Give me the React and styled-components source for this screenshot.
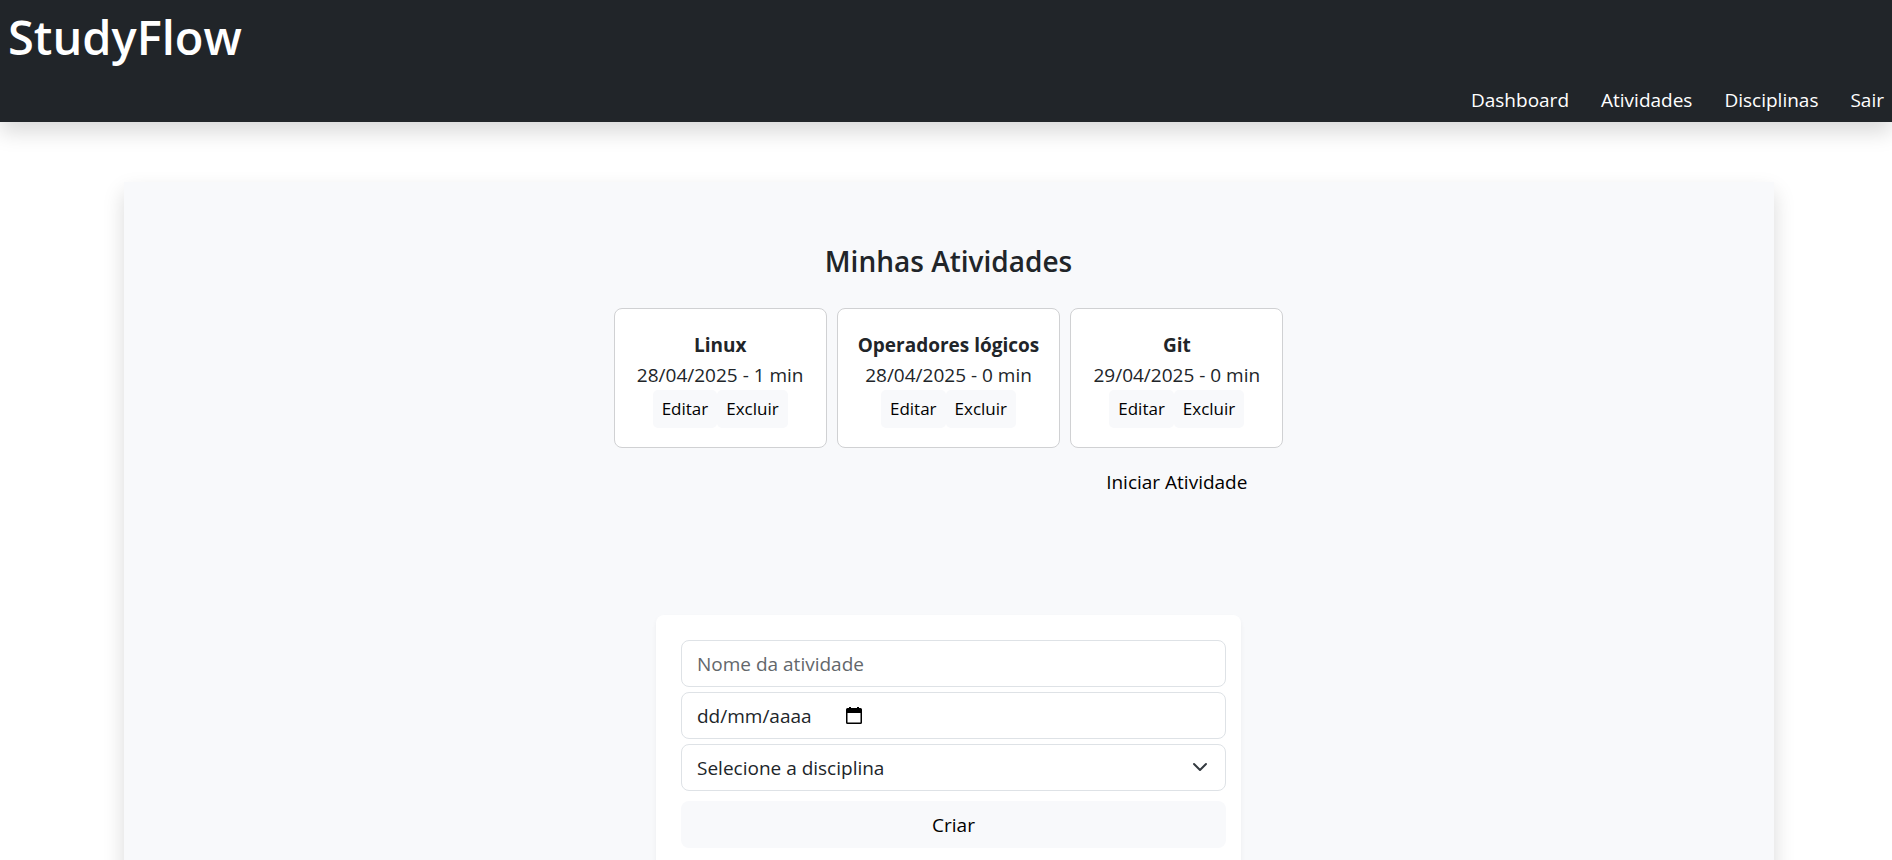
import React from "react";
import styled, { createGlobalStyle } from "styled-components";

const GlobalStyle = createGlobalStyle`
  *, *::before, *::after { box-sizing: border-box; }
  body {
    margin: 0;
    background: #fff;
    color: #212529;
    font-family: "Segoe UI", "Open Sans", "Noto Sans", sans-serif;
    font-size: 19px;
    line-height: 30px;
  }
  button, input, select { font: inherit; color: inherit; }
`;

const Header = styled.header`
  display: flex;
  flex-direction: column;
  gap: 18px;
  padding: 7px 8px;
  background: #212529;
  color: #fff;
  box-shadow: 0 10px 20px rgba(0, 0, 0, 0.15);
`;

const Brand = styled.h1`
  margin: 0;
  font-size: 47px;
  font-weight: 600;
  line-height: 60px;
`;

const Nav = styled.nav`
  display: flex;
  justify-content: flex-end;
  gap: 32px;
`;

const NavLink = styled.a`
  color: #fff;
  text-decoration: none;
`;

const Page = styled.main`
  padding: 60px 0 60px 5px;
`;

const Panel = styled.div`
  display: flex;
  flex-direction: column;
  align-items: center;
  max-width: 1650px;
  margin: 0 auto;
  padding: 61px 16px;
  background: #f8f9fb;
  box-shadow: 0 10px 20px rgba(0, 0, 0, 0.15);
`;

const Title = styled.h2`
  margin: 0 0 29px;
  font-size: 28px;
  font-weight: 600;
  line-height: 36px;
`;

const ActivityList = styled.ul`
  display: flex;
  flex-wrap: wrap;
  justify-content: center;
  gap: 10px;
  margin: 0;
  padding: 0;
  list-style: none;
`;

const ActivityItem = styled.li`
  display: flex;
  flex-direction: column;
  align-items: center;
  gap: 10px;
`;

const Card = styled.article`
  min-width: 213px;
  padding: 21px 20px 19px;
  border: 1px solid #d0d1d3;
  border-radius: 8px;
  background: #fff;
  text-align: center;
`;

const CardTitle = styled.h3`
  margin: 0;
  font-size: 19px;
  font-weight: 700;
  line-height: 30px;
`;

const CardText = styled.p`
  margin: 0;
`;

const Actions = styled.div`
  display: flex;
  justify-content: center;
`;

const Button = styled.button`
  padding: 9px 16px 7px;
  border: 0;
  border-radius: 8px;
  background: #f8f9fb;
  color: #000;
  line-height: 31px;
  cursor: pointer;
`;

const SmallButton = styled(Button)`
  padding: 4px 9px;
  border-radius: 5px;
  font-size: 17px;
  line-height: 30px;
`;

const Form = styled.form`
  display: flex;
  flex-direction: column;
  gap: 5px;
  width: 100%;
  max-width: 585px;
  margin-top: 110px;
  padding: 25px 15px 25px 25px;
  border-radius: 8px;
  background: #fff;
  box-shadow: 0 3px 5px rgba(0, 0, 0, 0.05);
`;

const Field = styled.div`
  display: grid;
  grid-template-columns: ${(p) => p.$columns || "1fr"};
  align-items: center;
  height: 47px;
  padding: 1px 15px 0;
  border: 1px solid #dee2e6;
  border-radius: 8px;
`;

const Input = styled.input`
  width: 100%;
  min-width: 0;
  height: 30px;
  padding: 0;
  border: 0;
  outline: 0;
  background: transparent;
  &::placeholder { color: ${(p) => p.$hint || "#63676b"}; opacity: 1; }
`;

const Select = styled.select`
  width: 100%;
  height: 30px;
  padding: 0;
  border: 0;
  outline: 0;
  appearance: none;
  background: transparent;
`;

const SubmitButton = styled(Button)`
  margin-top: 5px;
`;

const CalendarIcon = () => (
  <svg width="18" height="20" viewBox="0 0 18 20" aria-hidden="true">
    <path
      fill="#000"
      fillRule="evenodd"
      d="M4 1h2v1h6V1h2v1h1.500A1.500 1.500 0 0 1 17 3.500v13a1.500 1.500 0 0 1-1.500 1.500h-13A1.500 1.500 0 0 1 1 16.500v-13A1.500 1.500 0 0 1 2.500 2H4zM2.500 7v9.500h13V7z"
    />
  </svg>
);

const ChevronIcon = () => (
  <svg width="20" height="20" viewBox="0 0 20 20" aria-hidden="true">
    <path fill="none" stroke="#343a40" strokeWidth="2" strokeLinecap="round" strokeLinejoin="round" d="m4 6 6 6 6-6" />
  </svg>
);

const links = ["Dashboard", "Atividades", "Disciplinas", "Sair"];

const activities = [
  { name: "Linux", detail: "28/04/2025 - 1 min" },
  { name: "Operadores lógicos", detail: "28/04/2025 - 0 min" },
  { name: "Git", detail: "29/04/2025 - 0 min" },
];

export default function App() {
  return (
    <>
      <GlobalStyle />
      <Header>
        <Brand>StudyFlow</Brand>
        <Nav>
          {links.map((label) => (
            <NavLink key={label} href="#">{label}</NavLink>
          ))}
        </Nav>
      </Header>
      <Page>
        <Panel>
          <Title>Minhas Atividades</Title>
          <ActivityList>
            {activities.map(({ name, detail }, i) => (
              <ActivityItem key={name}>
                <Card>
                  <CardTitle>{name}</CardTitle>
                  <CardText>{detail}</CardText>
                  <Actions>
                    <SmallButton type="button">Editar</SmallButton>
                    <SmallButton type="button">Excluir</SmallButton>
                  </Actions>
                </Card>
                {i === activities.length - 1 && <Button type="button">Iniciar Atividade</Button>}
              </ActivityItem>
            ))}
          </ActivityList>
          <Form onSubmit={(e) => e.preventDefault()}>
            <Field>
              <Input type="text" aria-label="Nome da atividade" placeholder="Nome da atividade" />
            </Field>
            <Field $columns="148px auto 1fr">
              <Input type="text" aria-label="Data" placeholder="dd/mm/aaaa" $hint="#212529" />
              <CalendarIcon />
            </Field>
            <Field $columns="1fr auto">
              <Select aria-label="Disciplina" defaultValue="">
                <option value="">Selecione a disciplina</option>
              </Select>
              <ChevronIcon />
            </Field>
            <SubmitButton type="submit">Criar</SubmitButton>
          </Form>
        </Panel>
      </Page>
    </>
  );
}
